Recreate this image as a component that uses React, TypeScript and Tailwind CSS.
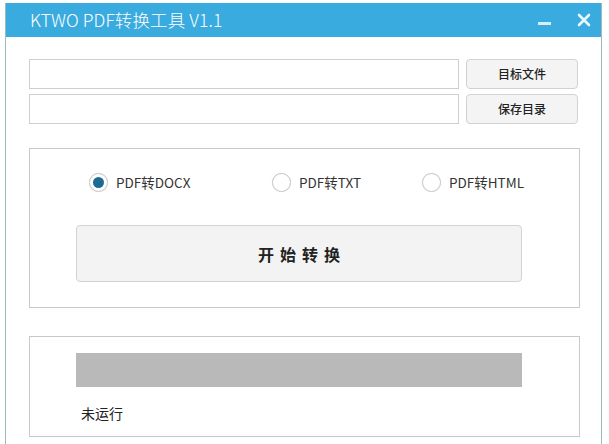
import React from 'react';

const font = { fontFamily: '"Noto Sans CJK SC", "Noto Sans", sans-serif' };

interface RadioProps {
  label: string;
  checked?: boolean;
  width: string;
}

const Radio: React.FC<RadioProps> = ({ label, checked, width }) => (
  <div className={`flex items-center gap-[8px] ${width}`}>
    <div className="w-[19px] h-[19px] rounded-full border border-[#c9c9c9] bg-white flex items-center justify-center shadow-[0_0_1px_#ddd]">
      {checked && <div className="w-[11px] h-[11px] rounded-full bg-[#1d6b94]" />}
    </div>
    <span className="text-[13.5px] text-[#333] leading-none">{label}</span>
  </div>
);

export default function App() {
  return (
    <div className="w-[609px] h-[444px] bg-white pt-[3px] pl-[5px] overflow-hidden" style={font}>
      <div className="w-[597px] h-[441px] border-l border-r border-[#9fb9bf] flex flex-col">
        {/* Title bar */}
        <div className="h-[34px] bg-[#3aabdf] flex items-center justify-between pl-[24px] pr-[10px] text-white">
          <span className="text-[17.5px] font-light tracking-[0.1px]">KTWO PDF转换工具 V1.1</span>
          <div className="flex items-center gap-[26px]">
            <div className="w-[13px] h-[3px] bg-[#d6eef9] mt-[6px]" />
            <svg width="14" height="14" viewBox="0 0 14 14">
              <path d="M2 2 L12 12 M12 2 L2 12" stroke="#e8f6fd" strokeWidth="2.6" strokeLinecap="round" />
            </svg>
          </div>
        </div>

        {/* File inputs */}
        <div className="pl-[23px] pr-[23px] pt-[22px] flex flex-col gap-[5px]">
          <div className="flex items-center gap-[7px]">
            <div className="w-[431px] h-[30px] border border-[#cfcfcf] bg-white" />
            <button className="w-[112px] h-[30px] rounded-[4px] border border-[#d2d2d2] bg-[#f4f4f4] text-[12px] font-medium text-[#222]">目标文件</button>
          </div>
          <div className="flex items-center gap-[7px]">
            <div className="w-[431px] h-[30px] border border-[#cfcfcf] bg-white" />
            <button className="w-[112px] h-[30px] rounded-[4px] border border-[#d2d2d2] bg-[#f4f4f4] text-[12px] font-medium text-[#222]">保存目录</button>
          </div>
        </div>

        {/* Options panel */}
        <div className="ml-[23px] mt-[24px] w-[551px] h-[160px] border border-[#c9c9c9] flex flex-col">
          <div className="flex items-center pl-[59px] pt-[24px]">
            <Radio label="PDF转DOCX" checked width="w-[183px]" />
            <Radio label="PDF转TXT" width="w-[150px]" />
            <Radio label="PDF转HTML" width="w-[120px]" />
          </div>
          <button className="ml-[46px] mt-[33px] w-[446px] h-[57px] rounded-[4px] border border-[#d3d3d3] bg-[#f3f3f3] text-[16px] font-bold text-[#222] tracking-[6px] pl-[6px]">
            开始转换
          </button>
        </div>

        {/* Progress panel */}
        <div className="ml-[23px] mt-[28px] w-[551px] h-[101px] border border-[#c9c9c9] flex flex-col pl-[46px] pt-[16px]">
          <div className="w-[446px] h-[34px] bg-[#b9b9b9]" />
          <span className="mt-[19px] ml-[5px] text-[14px] text-[#222] leading-none">未运行</span>
        </div>
      </div>
    </div>
  );
}
